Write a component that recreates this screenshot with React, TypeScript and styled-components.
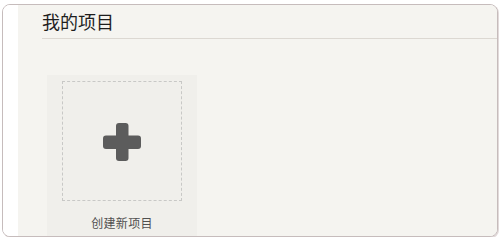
import { createGlobalStyle } from "styled-components";
import styled from "styled-components";

const GlobalStyle = createGlobalStyle`
  html, body {
    margin: 0;
    padding: 0;
    background: #ffffff;
  }
  body {
    font-family: "Noto Sans", "Noto Sans CJK SC", sans-serif;
  }
`;

const Frame = styled.div`
  display: flex;
  margin: 4px 2px 0 2px;
  height: 231px;
  border: 1px solid #c6bcbc;
  border-radius: 8px;
  background: #ffffff;
  overflow: hidden;
  box-shadow: 1px 1px 0 #e2dada;
`;

const Strip = styled.div`
  width: 15px;
  flex-shrink: 0;
  background: #ffffff;
`;

const Main = styled.main`
  flex: 1;
  min-height: 0;
  background: #f5f4f0;
  padding-left: 24px;
  display: flex;
  flex-direction: column;
  overflow: hidden;
`;

const Header = styled.header`
  flex-shrink: 0;
  height: 33px;
  border-bottom: 1px solid #dcd8d2;
  display: flex;
  align-items: center;
`;

const Title = styled.h1`
  margin: 0;
  margin-top: -2px;
  font-size: 18px;
  font-weight: 400;
  color: #1e1e1e;
`;

const Grid = styled.section`
  flex-shrink: 0;
  display: flex;
  gap: 16px;
  padding: 36px 0 0 5px;
`;

const NewCard = styled.button`
  width: 150px;
  height: 180px;
  flex-shrink: 0;
  padding: 6px 15px 0;
  border: none;
  background: #f0efeb;
  display: flex;
  flex-direction: column;
  align-items: center;
  cursor: pointer;
  font: inherit;
`;

const DropZone = styled.div`
  width: 118px;
  height: 118px;
  border: 1px dashed #c8c8c6;
  display: flex;
  align-items: center;
  justify-content: center;
`;

const Label = styled.span`
  margin-top: 14px;
  font-size: 12px;
  line-height: 18px;
  color: #505050;
  letter-spacing: 0.3px;
`;

const PlusIcon = () => (
  <svg width="38" height="38" viewBox="0 0 38 38" style={{ marginTop: 1 }}>
    <rect x="13" y="0" width="12.5" height="38" rx="3" fill="#5c5c5c" />
    <rect x="0" y="12.5" width="38" height="13.5" rx="3" fill="#5c5c5c" />
  </svg>
);

export default function App() {
  return (
    <>
      <GlobalStyle />
      <Frame>
        <Strip />
        <Main>
          <Header>
            <Title>我的项目</Title>
          </Header>
          <Grid>
            <NewCard>
              <DropZone>
                <PlusIcon />
              </DropZone>
              <Label>创建新项目</Label>
            </NewCard>
          </Grid>
        </Main>
      </Frame>
    </>
  );
}
